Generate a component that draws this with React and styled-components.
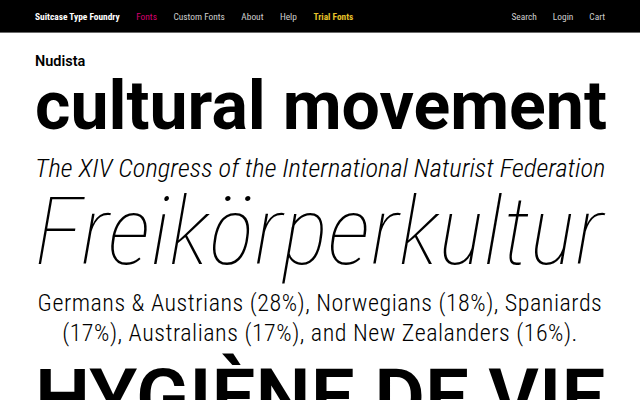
import React from 'react';
import styled, { createGlobalStyle } from 'styled-components';

const Global = createGlobalStyle`
  body {
    margin: 0;
    background: #fff;
    font-family: Roboto, "Liberation Sans", sans-serif;
    color: #000;
  }
`;

const Nav = styled.nav`
  height: 33px;
  background: #000;
  border-bottom: 1px solid #6a6a6a;
  box-sizing: border-box;
  display: flex;
  align-items: center;
  justify-content: space-between;
  padding: 0 35px;
`;

const NavGroup = styled.div`
  display: flex;
  align-items: center;
  gap: ${p => p.gap || 16}px;
`;

const NavLink = styled.a`
  font-size: 9.4px;
  font-stretch: 75%;
  font-weight: ${p => (p.bold ? 700 : 400)};
  color: ${p => p.color || '#cfcfcf'};
  text-decoration: none;
  white-space: nowrap;
`;

const Main = styled.main`
  padding: 0 35px;
  overflow: hidden;
`;

const Label = styled.div`
  margin-top: 20px;
  font-size: 14.5px;
  line-height: 18px;
  font-weight: 600;
`;

const Sample = styled.div`
  font-size: ${p => p.size}px;
  line-height: ${p => p.lh}px;
  font-weight: ${p => p.weight};
  font-style: ${p => (p.italic ? 'italic' : 'normal')};
  font-stretch: ${p => p.stretch}%;
  letter-spacing: ${p => p.track || 0}px;
  margin-top: ${p => p.mt || 0}px;
  text-align: ${p => p.align || 'left'};
  white-space: nowrap;
`;

export default function App() {
  return (
    <>
      <Global />
      <Nav>
        <NavGroup gap={16.5}>
          <NavLink bold color="#fff">Suitcase Type Foundry</NavLink>
          <NavLink color="#d8006f">Fonts</NavLink>
          <NavLink>Custom Fonts</NavLink>
          <NavLink>About</NavLink>
          <NavLink>Help</NavLink>
          <NavLink bold color="#e6c22a">Trial Fonts</NavLink>
        </NavGroup>
        <NavGroup>
          <NavLink>Search</NavLink>
          <NavLink>Login</NavLink>
          <NavLink>Cart</NavLink>
        </NavGroup>
      </Nav>
      <Main>
        <Label>Nudista</Label>
        <Sample size={68} lh={70} weight={700} stretch={100}>
          cultural movement
        </Sample>
        <Sample size={26.5} lh={32} weight={300} italic stretch={75} mt={11}>
          The XIV Congress of the International Naturist Federation
        </Sample>
        <Sample size={95} lh={96} weight={100} italic stretch={75} track={0.7}>
          Freikörperkultur
        </Sample>
        <Sample size={24} lh={30} weight={360} stretch={85} track={0.52} mt={8} align="center">
          Germans &amp; Austrians (28%), Norwegians (18%), Spaniards
          <br />
          (17%), Australians (17%), and New Zealanders (16%).
        </Sample>
        <Sample size={78} lh={80} weight={600} stretch={100} mt={10}>
          HYGIÈNE DE VIE
        </Sample>
      </Main>
    </>
  );
}
